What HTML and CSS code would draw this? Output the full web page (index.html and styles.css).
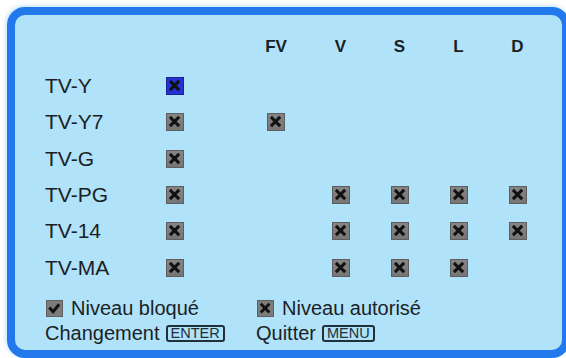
FILE: index.html
```html
<!DOCTYPE html>
<html lang="fr">
<head>
    <meta charset="UTF-8">
    <title>Contrôle parental</title>
    <link rel="stylesheet" href="styles.css">
</head>
<body>
    <svg class="defs" width="0" height="0">
        <symbol id="cross" viewBox="0 0 18 18">
            <path d="M4.5 4.5 L12.5 12.5 M12.5 4.5 L4.5 12.5" stroke="#111" stroke-width="3.4" stroke-linecap="square"/>
        </symbol>
        <symbol id="tick" viewBox="0 0 16 16">
            <path d="M2.5 7 L6.5 11.5 L13 3.5" fill="none" stroke="#111" stroke-width="3.2"/>
        </symbol>
    </svg>

    <div class="frame">
        <div class="grid">
            <span class="label"></span>
            <span></span>
            <span class="head">FV</span>
            <span class="head">V</span>
            <span class="head">S</span>
            <span class="head">L</span>
            <span class="head">D</span>

            <span class="label">TV-Y</span>
            <span class="box sel"><svg><use href="#cross"/></svg></span>
            <span></span><span></span><span></span><span></span><span></span>

            <span class="label">TV-Y7</span>
            <span class="box"><svg><use href="#cross"/></svg></span>
            <span class="box"><svg><use href="#cross"/></svg></span>
            <span></span><span></span><span></span><span></span>

            <span class="label">TV-G</span>
            <span class="box"><svg><use href="#cross"/></svg></span>
            <span></span><span></span><span></span><span></span><span></span>

            <span class="label">TV-PG</span>
            <span class="box"><svg><use href="#cross"/></svg></span>
            <span></span>
            <span class="box"><svg><use href="#cross"/></svg></span>
            <span class="box"><svg><use href="#cross"/></svg></span>
            <span class="box"><svg><use href="#cross"/></svg></span>
            <span class="box"><svg><use href="#cross"/></svg></span>

            <span class="label">TV-14</span>
            <span class="box"><svg><use href="#cross"/></svg></span>
            <span></span>
            <span class="box"><svg><use href="#cross"/></svg></span>
            <span class="box"><svg><use href="#cross"/></svg></span>
            <span class="box"><svg><use href="#cross"/></svg></span>
            <span class="box"><svg><use href="#cross"/></svg></span>

            <span class="label">TV-MA</span>
            <span class="box"><svg><use href="#cross"/></svg></span>
            <span></span>
            <span class="box"><svg><use href="#cross"/></svg></span>
            <span class="box"><svg><use href="#cross"/></svg></span>
            <span class="box"><svg><use href="#cross"/></svg></span>
            <span></span>
        </div>

        <div class="legend">
            <div class="item"><span class="mini"><svg><use href="#tick"/></svg></span>Niveau bloqué</div>
            <div class="item"><span class="mini"><svg><use href="#cross"/></svg></span>Niveau autorisé</div>
            <div class="item">Changement <span class="key">ENTER</span></div>
            <div class="item">Quitter <span class="key">MENU</span></div>
        </div>
    </div>
</body>
</html>
```

FILE: styles.css
```css
html, body {
    margin: 0;
    overflow: hidden;
    background: #ffffff;
}
body {
    font-family: "Liberation Sans", Arial, sans-serif;
    color: #1b1f24;
}
.defs {
    position: absolute;
}
.frame {
    box-sizing: border-box;
    margin: 7px 0 0 7px;
    width: 563px;
    height: 351px;
    border: 8px solid #2179eb;
    border-radius: 18px;
    background: #b0e2fa;
    padding: 11px 0 0 30px;
    box-shadow: -1px -1px 4px rgba(120, 190, 250, 0.5);
}
.grid {
    display: grid;
    grid-template-columns: 64px 132px 70px repeat(4, 59px);
    grid-template-rows: 42px repeat(6, 36.3px);
    align-items: center;
    justify-items: center;
}
.label {
    justify-self: start;
    font-size: 21px;
    white-space: nowrap;
}
.head {
    font-size: 17px;
    font-weight: bold;
}
.box {
    box-sizing: border-box;
    width: 18px;
    height: 18px;
    background: linear-gradient(#858585, #767676);
    border: 1px solid #5e5e5e;
    display: flex;
}
.box svg {
    width: 16px;
    height: 16px;
}
.box.sel {
    background: #2532d2;
    border-color: #1a2199;
}
.legend {
    display: grid;
    grid-template-columns: 211px auto;
    margin-top: 10px;
    font-size: 20px;
    line-height: 25px;
}
.item {
    display: flex;
    align-items: center;
    white-space: nowrap;
}
.mini {
    box-sizing: border-box;
    width: 17px;
    height: 17px;
    margin: 0 8px 0 1px;
    background: #7c7c7c;
    border: 1px solid #606060;
    display: flex;
}
.mini svg {
    width: 15px;
    height: 15px;
}
.key {
    display: inline-block;
    margin-left: 6px;
    padding: 0 3px;
    border: 2px solid #22303c;
    border-radius: 3px;
    font-size: 14.5px;
    line-height: 13px;
    color: #22303c;
}
```
